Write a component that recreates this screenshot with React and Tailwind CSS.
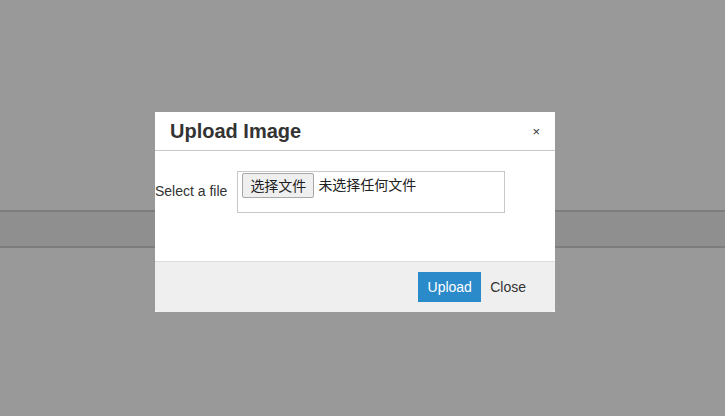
import React from 'react';

function UploadModal() {
  return (
    <div className="absolute left-[155px] top-[112px] w-[400px] bg-white font-['Liberation_Sans',Arial,sans-serif] text-[#333]">
      {/* header */}
      <div className="flex h-[39px] items-center justify-between border-b border-[#c8c8c8] pl-[15px] pr-[15px]">
        <h3 className="text-[20px] font-bold leading-none text-[#333]">Upload Image</h3>
        <button className="text-[13px] leading-none text-[#333]">×</button>
      </div>
      {/* body */}
      <div className="flex items-start pt-[20px] pb-[48px]">
        <label className="mt-[10px] text-[14px] leading-[20px] text-[#333]">Select a file</label>
        <div className="ml-[10px] h-[42px] w-[268px] border border-[#c8c8c8] pl-[4px] pt-[1px]">
          <div className="flex items-center font-['Liberation_Sans','Noto_Sans_CJK_SC',sans-serif] text-[14px] text-[#222]">
            <span className="flex h-[25px] items-center rounded-[2px] border border-[#a9a9a9] bg-[#efefef] px-[7px] leading-none">
              选择文件
            </span>
            <span className="ml-[4px] text-[14px]">未选择任何文件</span>
          </div>
        </div>
      </div>
      {/* footer */}
      <div className="flex h-[51px] items-center justify-end rounded-b-[3px] border-t border-[#dcdcdc] bg-[#efefef] pr-[20px]">
        <button className="h-[30px] w-[63px] bg-[#2b8aca] text-[14px] text-white">Upload</button>
        <button className="h-[30px] px-[9px] text-[14px] text-[#333]">Close</button>
      </div>
    </div>
  );
}

export default function App() {
  return (
    <div className="relative h-[416px] w-[725px] overflow-hidden bg-[#999999]">
      <div className="h-[210px]" />
      <div className="h-[38px] border-y-2 border-[#7d7d7d] bg-[#8f8f8f]" />
      <UploadModal />
    </div>
  );
}
